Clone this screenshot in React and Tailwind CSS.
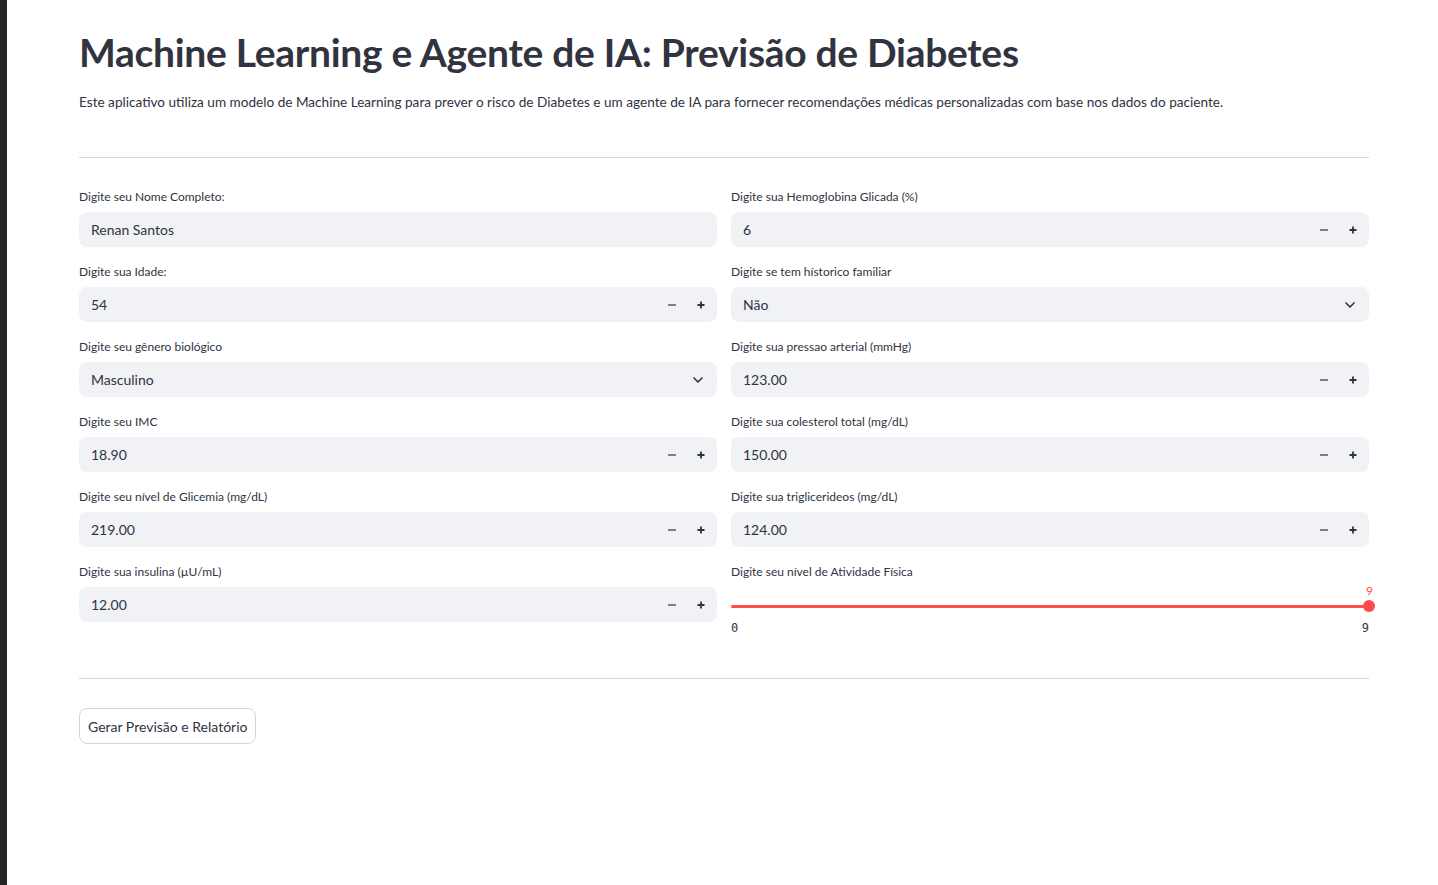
import { ChevronDown } from "lucide-react";

const FONT = { fontFamily: "Lato, 'Noto Sans', sans-serif" };

function Label({ children }) {
  return <p className="text-[12px] leading-[16px] text-[#31333f]">{children}</p>;
}

function Stepper() {
  return (
    <div className="flex items-center h-full">
      <button className="w-[27px] h-full flex items-center justify-center text-[#31333f]">
        <svg width="10" height="10" viewBox="0 0 10 10"><path d="M1 5h8" stroke="currentColor" strokeWidth="1.2" /></svg>
      </button>
      <button className="w-[32px] h-full flex items-center justify-center text-[#31333f]">
        <svg width="10" height="10" viewBox="0 0 10 10"><path d="M1.5 5h7M5 1.5v7" stroke="currentColor" strokeWidth="1.8" /></svg>
      </button>
    </div>
  );
}

function Field({ label, value, kind }) {
  return (
    <div className="flex flex-col pb-[17px]">
      <Label>{label}</Label>
      <div className="mt-[7px] h-[35px] rounded-[8px] bg-[#f0f2f6] flex items-center justify-between pl-[12px]">
        <span className="text-[14px] text-[#31333f]">{value}</span>
        {kind === "number" && <Stepper />}
        {kind === "select" && (
          <ChevronDown size={16} strokeWidth={2.5} className="mr-[11px] text-[#31333f]" />
        )}
      </div>
    </div>
  );
}

function Slider() {
  return (
    <div className="flex flex-col">
      <Label>Digite seu nível de Atividade Física</Label>
      <div className="mt-[5px] text-right text-[12px] leading-[12px] text-[#ff4b4b] -mr-[4px]">9</div>
      <div className="mt-[3px] h-[12px] relative flex items-center">
        <div className="h-[3px] w-full bg-[#ff4b4b] rounded-full" />
        <div className="absolute right-[-6px] top-0 w-[12px] h-[12px] rounded-full bg-[#ff4b4b]" />
      </div>
      <div className="mt-[9px] flex justify-between text-[12px] leading-[14px] text-[#31333f]" style={{ fontFamily: "'DejaVu Sans Mono', monospace" }}>
        <span>0</span>
        <span>9</span>
      </div>
    </div>
  );
}

export default function App() {
  return (
    <div className="min-h-screen flex bg-white" style={FONT}>
      <div className="w-[7px] bg-[#262626] shrink-0" />
      <main className="flex-1 pl-[72px] pr-[69px]">
        <h1 className="pt-[28px] text-[39px] leading-[48px] font-bold text-[#31333f] tracking-[-0.3px]">
          Machine Learning e Agente de IA: Previsão de Diabetes
        </h1>
        <p className="mt-[16px] text-[13.6px] leading-[20px] text-[#31333f]">
          Este aplicativo utiliza um modelo de Machine Learning para prever o risco de Diabetes e um agente de IA para fornecer recomendações médicas personalizadas com base nos dados do paciente.
        </p>
        <hr className="mt-[45px] border-t border-[#d6d6d9]" />
        <div className="mt-[31px] grid grid-cols-2 gap-x-[14px]">
          <div className="flex flex-col">
            <Field label="Digite seu Nome Completo:" value="Renan Santos" />
            <Field label="Digite sua Idade:" value="54" kind="number" />
            <Field label="Digite seu gênero biológico" value="Masculino" kind="select" />
            <Field label="Digite seu IMC" value="18.90" kind="number" />
            <Field label="Digite seu nível de Glicemia (mg/dL)" value="219.00" kind="number" />
            <Field label="Digite sua insulina (µU/mL)" value="12.00" kind="number" />
          </div>
          <div className="flex flex-col">
            <Field label="Digite sua Hemoglobina Glicada (%)" value="6" kind="number" />
            <Field label="Digite se tem hístorico familiar" value="Não" kind="select" />
            <Field label="Digite sua pressao arterial (mmHg)" value="123.00" kind="number" />
            <Field label="Digite sua colesterol total (mg/dL)" value="150.00" kind="number" />
            <Field label="Digite sua triglicerideos (mg/dL)" value="124.00" kind="number" />
            <Slider />
          </div>
        </div>
        <hr className="mt-[39px] border-t border-[#d6d6d9]" />
        <button className="mt-[29px] h-[36px] px-[8px] rounded-[8px] border border-[#d6d6d9] bg-white text-[14px] text-[#31333f]">
          Gerar Previsão e Relatório
        </button>
      </main>
    </div>
  );
}
